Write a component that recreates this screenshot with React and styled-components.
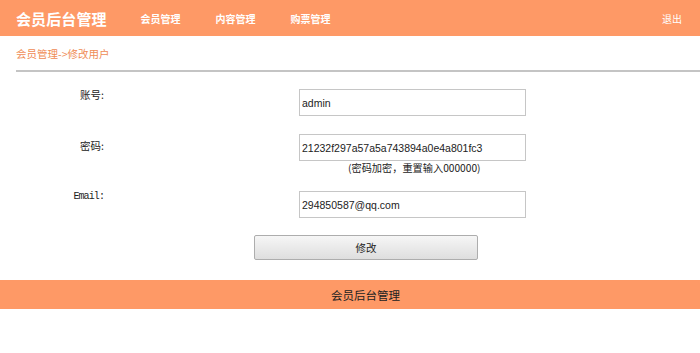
import React from 'react';
import styled, { createGlobalStyle } from 'styled-components';

const GlobalStyle = createGlobalStyle`
  html, body {
    margin: 0;
    padding: 0;
    background: #fff;
    font-family: "Liberation Sans", "Noto Sans CJK SC", sans-serif;
  }
`;

const Page = styled.div`
  width: 700px;
  height: 353px;
  overflow: hidden;
`;

const Header = styled.div`
  height: 36px;
  background: #fe9966;
  display: flex;
  align-items: center;
  padding: 0 18px 0 16px;
  color: #fff;
`;

const Logo = styled.div`
  font-family: "Noto Sans CJK SC", sans-serif;
  font-size: 15px;
  font-weight: 700;
  letter-spacing: 0.1px;
  margin-right: 21px;
`;

const Nav = styled.div`
  display: flex;
  gap: 35px;
  flex: 1;
  padding-left: 13px;
`;

const NavItem = styled.a`
  font-family: "Noto Sans CJK SC", sans-serif;
  font-size: 10px;
  font-weight: 700;
  color: #fff;
  cursor: pointer;
`;

const Logout = styled.a`
  font-family: "Noto Sans CJK SC", sans-serif;
  font-size: 10px;
  color: #fff;
  cursor: pointer;
`;

const Crumb = styled.div`
  margin-left: 16px;
  height: 34px;
  display: flex;
  align-items: center;
  border-bottom: 2px solid #c4c4c4;
  font-family: "Noto Sans CJK SC", sans-serif;
  font-size: 10.5px;
  color: #ef8c55;
`;

const Form = styled.div`
  display: grid;
  grid-template-columns: 104px 195px 227px;
  padding-top: 17px;
`;

const Label = styled.div`
  grid-column: 1;
  text-align: right;
  font-family: ${p => (p.mono ? '"Liberation Mono", monospace' : '"Noto Sans CJK SC", sans-serif')};
  font-size: ${p => (p.mono ? '10px' : '10.5px')};
  letter-spacing: ${p => (p.mono ? '-0.9px' : '0')};
  color: #222;
  padding-top: ${p => p.offset}px;
  line-height: 12px;
`;

const Field = styled.div`
  grid-column: 3;
  margin-bottom: ${p => p.gap}px;
`;

const Input = styled.input`
  box-sizing: border-box;
  width: 227px;
  height: 27px;
  border: 1px solid #c6c6c6;
  padding: 0 2px;
  font-family: "Liberation Sans", Arial, sans-serif;
  font-size: 10.5px;
  color: #222;
  outline: none;
`;

const Hint = styled.div`
  font-family: "Noto Sans CJK SC", sans-serif;
  font-size: 10.2px;
  color: #222;
  padding-left: 49px;
  height: 14px;
  line-height: 14px;
  white-space: nowrap;
`;

const ButtonRow = styled.div`
  grid-column: 1 / 4;
  padding-left: 254px;
`;

const Button = styled.button`
  width: 224px;
  height: 25px;
  border: 1px solid #adadad;
  border-radius: 2px;
  background: linear-gradient(#f6f6f6, #dedede);
  font-family: "Noto Sans CJK SC", sans-serif;
  font-size: 10.5px;
  color: #222;
  cursor: pointer;
`;

const Footer = styled.div`
  margin-top: 20px;
  height: 29px;
  background: #fe9966;
  display: flex;
  align-items: center;
  justify-content: center;
  padding-left: 31px;
  font-family: "Noto Sans CJK SC", sans-serif;
  font-size: 11.5px;
  color: #222;
`;

export default function App() {
  return (
    <Page>
      <GlobalStyle />
      <Header>
        <Logo>会员后台管理</Logo>
        <Nav>
          <NavItem>会员管理</NavItem>
          <NavItem>内容管理</NavItem>
          <NavItem>购票管理</NavItem>
        </Nav>
        <Logout>退出</Logout>
      </Header>
      <Crumb>会员管理-&gt;修改用户</Crumb>
      <Form>
        <Label offset={0}>账号:</Label>
        <Field gap={18}>
          <Input defaultValue="admin" />
        </Field>
        <Label offset={6}>密码:</Label>
        <Field gap={16}>
          <Input defaultValue="21232f297a57a5a743894a0e4a801fc3" />
          <Hint>(密码加密，重置输入000000)</Hint>
        </Field>
        <Label mono offset={0}>Email:</Label>
        <Field gap={17}>
          <Input defaultValue="294850587@qq.com" />
        </Field>
        <ButtonRow>
          <Button>修改</Button>
        </ButtonRow>
      </Form>
      <Footer>会员后台管理</Footer>
    </Page>
  );
}
